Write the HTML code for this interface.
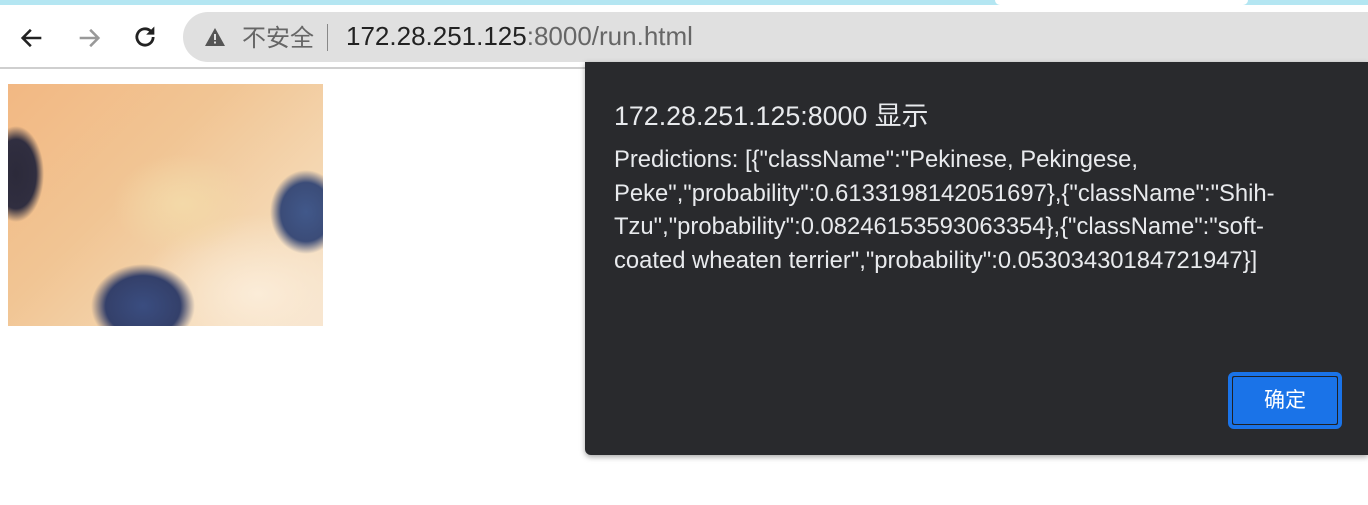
<!DOCTYPE html>
<html><head><meta charset="utf-8"><style>
body{margin:0;width:1368px;height:505px;overflow:hidden;background:#fff;position:relative;font-family:"Liberation Sans","Noto Sans CJK SC",sans-serif}
.abs{position:absolute}
#img{left:8px;top:84px;width:315px;height:242px;overflow:hidden;background:
radial-gradient(ellipse 36px 42px at 298px 128px,#41588a 0,#3b4c78 70%,rgba(40,40,60,0) 100%),
radial-gradient(ellipse 28px 48px at 8px 90px,#2c2a3a 0,#302e40 72%,rgba(40,40,60,0) 100%),
radial-gradient(ellipse 52px 42px at 135px 222px,#3a4d80 0,#34406a 72%,rgba(40,40,60,0) 100%),
radial-gradient(ellipse 70px 50px at 175px 120px,#f3d9a8 0,rgba(243,217,168,0) 100%),
radial-gradient(ellipse 120px 80px at 250px 210px,#fbecd8 0,rgba(251,236,216,0) 100%),
linear-gradient(135deg,#f2b883 0%,#f1c594 40%,#f4d6b0 70%,#f6e3cc 100%)}
</style></head><body>
<div class="abs" style="left:0;top:0;width:1368px;height:5px;background:#b4e6f2"></div>
<div class="abs" style="left:995px;top:0;width:253px;height:5px;background:#fff;border-radius:0 0 8px 8px"></div>
<div class="abs" style="left:0;top:67px;width:1368px;height:2px;background:#cfcfcf"></div>
<svg class="abs" style="left:18px;top:24px" width="28" height="28" viewBox="0 0 24 24"><path d="M20 12H5M11 5l-7 7 7 7" stroke="#222" stroke-width="2.2" fill="none"/></svg>
<svg class="abs" style="left:75px;top:24px" width="28" height="28" viewBox="0 0 24 24"><path d="M4 12h15M13 5l7 7-7 7" stroke="#999" stroke-width="2.2" fill="none"/></svg>
<svg class="abs" style="left:131px;top:23px" width="28" height="28" viewBox="0 0 24 24"><path d="M19 12a7 7 0 1 1-2.2-5.1" stroke="#222" stroke-width="2.4" fill="none"/><path d="M20 3v7h-7z" fill="#222"/></svg>
<div class="abs" style="left:183px;top:12px;width:1220px;height:50px;background:#e0e0e0;border-radius:25px"></div>
<svg class="abs" style="left:204px;top:27px" width="22" height="20" viewBox="0 0 22 20"><path d="M11 1L21 19H1z" fill="#555"/><rect x="10" y="7" width="2" height="6" fill="#e0e0e0"/><rect x="10" y="14.5" width="2" height="2" fill="#e0e0e0"/></svg>
<div class="abs" style="left:242px;top:18px;font-size:24px;color:#666">不安全</div>
<div class="abs" style="left:327px;top:24px;width:1px;height:27px;background:#888"></div>
<div class="abs" style="left:346px;top:21px;font-size:26px;color:#222;white-space:nowrap">172.28.251.125<span style="color:#666">:8000/run.html</span></div>
<div id="img" class="abs"></div>
<div class="abs" style="left:585px;top:62px;width:783px;height:393px;background:#292a2d;border-radius:0 0 0 6px;box-shadow:0 2px 6px rgba(0,0,0,.35)"></div>
<div class="abs" style="left:614px;top:94px;font-size:26.8px;color:#e8eaed;white-space:nowrap">172.28.251.125:8000 显示</div>
<div class="abs" style="left:614px;top:143px;font-size:23.8px;line-height:33.5px;color:#e8eaed;white-space:nowrap">Predictions: [{"className":"Pekinese, Pekingese,<br>Peke","probability":0.6133198142051697},{"className":"Shih-<br>Tzu","probability":0.08246153593063354},{"className":"soft-<br>coated wheaten terrier","probability":0.05303430184721947}]</div>
<div class="abs" style="left:1228px;top:372px;width:106px;height:49px;border:4px solid #1a73e8;border-radius:6px"></div>
<div class="abs" style="left:1232px;top:376px;width:104px;height:47px;background:#1a73e8;border:1px solid #202124;border-radius:3px;color:#fff;font-size:21px;text-align:center;line-height:47px">确定</div>
</body></html>
